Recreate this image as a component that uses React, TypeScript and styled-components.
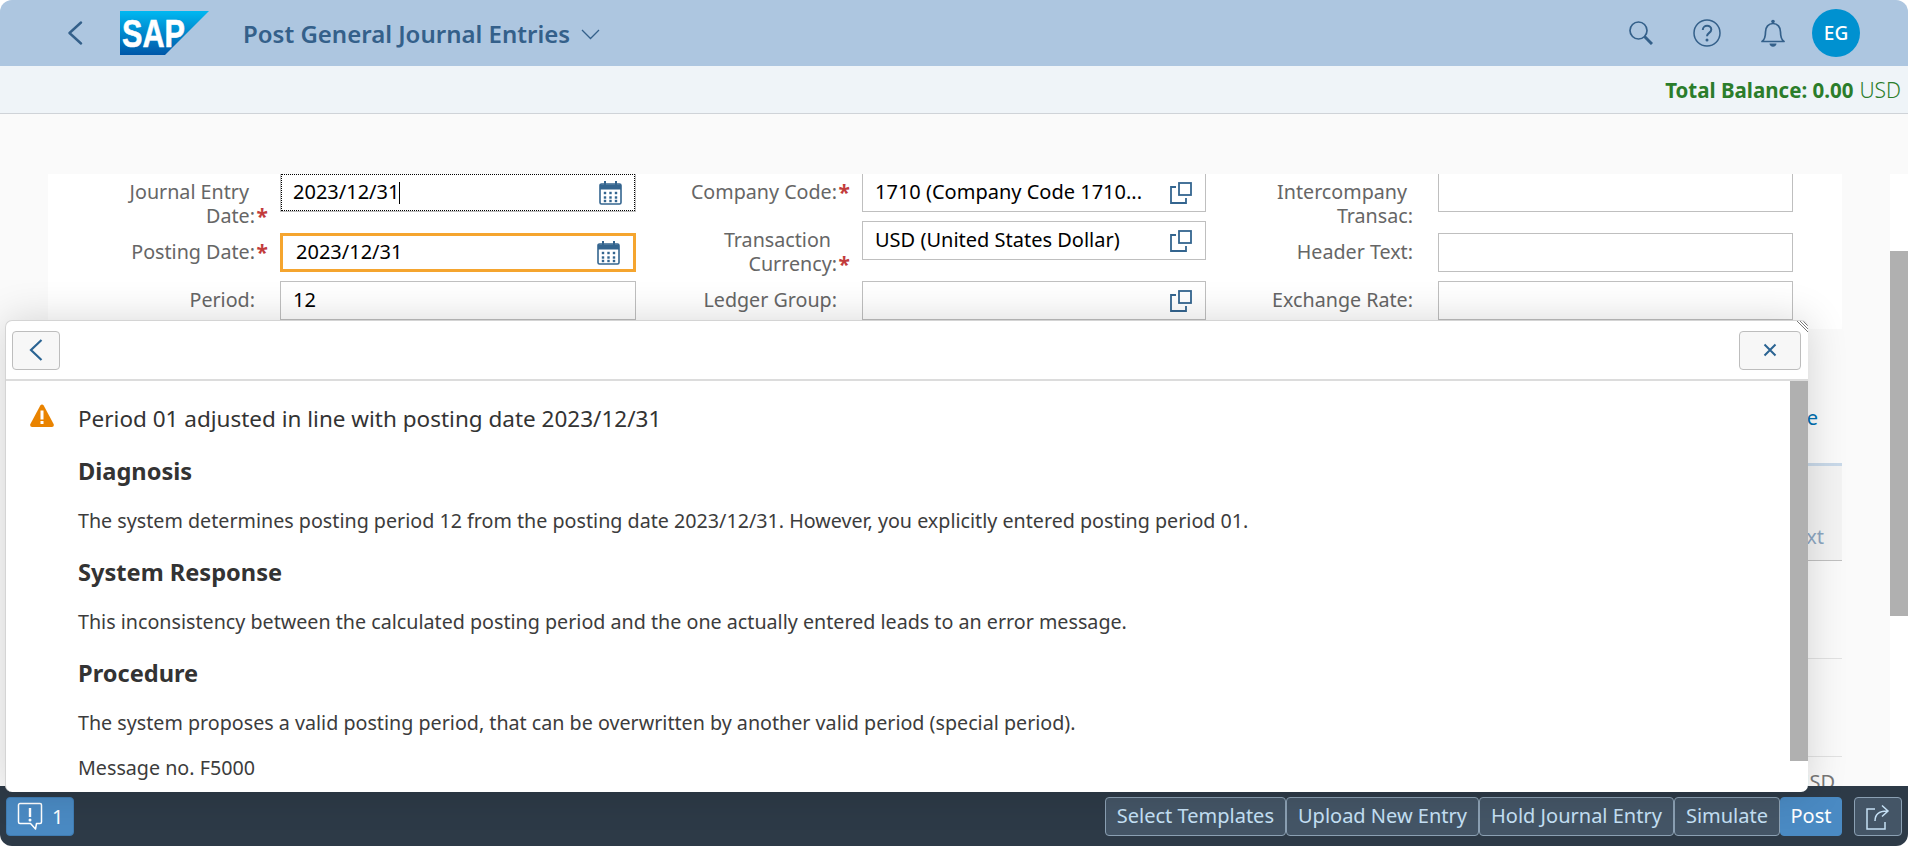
import React from 'react'
import styled, { createGlobalStyle } from 'styled-components'

const FONT = `"Noto Sans", "Open Sans", Arial, sans-serif`

const GlobalStyle = createGlobalStyle`
  html, body {
    margin: 0;
    padding: 0;
    height: 100%;
    background: #fff;
    overflow: hidden;
  }
  * {
    box-sizing: border-box;
  }
`

const Shell = styled.div`
  position: relative;
  width: 1908px;
  height: 846px;
  display: flex;
  flex-direction: column;
  overflow: hidden;
  border-radius: 12px;
  font-family: ${FONT};
  background: #fafafa;
`

const Header = styled.header`
  height: 66px;
  flex: none;
  display: flex;
  align-items: center;
  padding-left: 67px;
  padding-right: 48px;
  background: #adc6e0;
  color: #34608a;
`

const LogoWrap = styled.div`
  margin-left: 37px;
  width: 89px;
  height: 44px;
`

const Title = styled.div`
  margin-left: 34px;
  font-size: 24px;
  font-weight: 600;
  color: #34608a;
  white-space: nowrap;
`

const TitleCaret = styled.svg`
  margin-left: 11px;
  margin-top: 3px;
`

const HeaderRight = styled.div`
  margin-left: auto;
  display: flex;
  align-items: center;
`

const HeaderIcon = styled.svg<{ $gap: number }>`
  display: block;
  margin-right: ${p => p.$gap}px;
`

const Avatar = styled.div`
  width: 48px;
  height: 48px;
  border-radius: 50%;
  background: #0091d0;
  color: #fff;
  font-size: 19px;
  font-weight: 500;
  display: flex;
  align-items: center;
  justify-content: center;
`

const SubBar = styled.div`
  height: 48px;
  flex: none;
  display: flex;
  align-items: center;
  justify-content: flex-end;
  padding: 0 7px 0 0;
  background: #eff4f8;
  border-bottom: 1px solid #cfd3d8;
  font-size: 20.5px;
  color: #2b7d2b;
`

const Balance = styled.strong`
  font-weight: 700;
`

const Currency = styled.span`
  margin-left: 6px;
  font-weight: 300;
  font-size: 21px;
`

const Main = styled.main`
  flex: 1;
  min-height: 0;
  display: flex;
`

const Content = styled.div`
  flex: 1;
  min-width: 0;
  padding: 60px 48px 0;
`

const Panel = styled.div`
  height: 100%;
  display: flex;
  flex-direction: column;
  overflow: hidden;
  background: #fafafa;
`

const FormGrid = styled.div`
  flex: none;
  margin-top: -1px;
  height: 156px;
  display: grid;
  grid-template-columns: 532px 582px 1fr;
  background: #fff;
`

const FormColumn = styled.div`
  display: flex;
  flex-direction: column;
`

const Field = styled.div<{ $labelWidth: number; $inputWidth: number }>`
  display: grid;
  grid-template-columns: ${p => p.$labelWidth}px ${p => p.$inputWidth}px;
  column-gap: 25px;
  align-items: start;
`

const Label = styled.label`
  position: relative;
  padding: 7px 0 5px;
  text-align: right;
  font-size: 19.7px;
  line-height: 24px;
  color: #666;
`

const LabelFirstLine = styled.span`
  display: block;
  padding-right: 6px;
`

const Star = styled.span`
  position: absolute;
  right: -13px;
  bottom: 5px;
  color: #c23b3b;
  font-size: 21px;
  font-weight: 700;
`

const InputSlot = styled.div`
  padding-bottom: 9px;
`

const InputBox = styled.div<{ $active?: boolean; $focus?: boolean }>`
  position: relative;
  height: 39px;
  display: flex;
  align-items: center;
  padding-left: ${p => (p.$active ? 13 : 12)}px;
  padding-right: 13px;
  background: #fff;
  border: ${p => (p.$active ? '3px solid #f5a52f' : '1px solid #bfbfbf')};
  font-size: 20px;
  color: #000;
  &::after {
    content: '';
    display: ${p => (p.$focus ? 'block' : 'none')};
    position: absolute;
    inset: 0;
    border: 1px dotted #000;
    pointer-events: none;
  }
`

const InputValue = styled.span`
  flex: 1;
  min-width: 0;
  padding-bottom: 2px;
  white-space: nowrap;
`

const Caret = styled.span`
  display: inline-block;
  width: 1px;
  height: 22px;
  margin-left: 0;
  vertical-align: -5px;
  background: #000;
`

const TabStrip = styled.div`
  flex: none;
  height: 137px;
  display: flex;
  align-items: flex-end;
  justify-content: flex-end;
  padding: 0 24px 33px 0;
  border-bottom: 3px solid #c9d9e9;
  font-size: 20px;
  line-height: 24px;
  color: #0070b1;
`

const TableHead = styled.div`
  flex: none;
  height: 95px;
  display: flex;
  align-items: flex-end;
  justify-content: flex-end;
  padding: 0 18px 11px 0;
  border-bottom: 1px solid #c0c0c0;
  background: #f3f3f3;
  font-size: 20px;
  line-height: 24px;
  color: #8da7c2;
`

const TableRow = styled.div`
  flex: none;
  height: 98px;
  border-bottom: 1px solid #e2e2e2;
`

const TotalRow = styled.div`
  flex: 1;
  text-align: right;
  padding: 13px 7px 0 0;
  font-size: 20px;
  line-height: 24px;
  color: #777;
`

const PageScroll = styled.div`
  flex: none;
  width: 18px;
  margin-top: 60px;
  background: #fff;
`

const PageThumb = styled.div`
  margin-top: 77px;
  height: 365px;
  background: #b0b0b0;
`

const Footer = styled.footer`
  flex: none;
  height: 60px;
  display: flex;
  align-items: flex-start;
  padding: 11px 6px 0;
  background: #2d3a47;
`

const MessageButton = styled.button`
  width: 68px;
  height: 39px;
  display: flex;
  align-items: center;
  padding: 0 0 0 10px;
  gap: 9px;
  border: 1px solid #3f7cb3;
  border-radius: 4px;
  background: #4a8ac3;
  color: #fff;
  font-family: inherit;
  font-size: 20px;
`

const FooterActions = styled.div`
  margin-left: auto;
  display: flex;
`

const ActionButton = styled.button<{ $primary?: boolean }>`
  height: 39px;
  padding: 0 ${p => (p.$primary ? 9.5 : 11)}px 2px;
  border: 1px solid ${p => (p.$primary ? '#4a8ac3' : '#8ba0b3')};
  border-radius: 4px;
  background: ${p => (p.$primary ? '#4a8ac3' : '#445566')};
  color: ${p => (p.$primary ? '#fff' : '#c5e0f5')};
  font-family: inherit;
  font-size: 20px;
  white-space: nowrap;
`

const ShareButton = styled.button`
  width: 48px;
  height: 39px;
  margin-left: 12px;
  display: flex;
  align-items: center;
  justify-content: center;
  padding: 0;
  border: 1px solid #8ba0b3;
  border-radius: 4px;
  background: #445566;
`

const Dialog = styled.section`
  position: absolute;
  left: 5px;
  top: 320px;
  width: 1803px;
  height: 472px;
  display: flex;
  flex-direction: column;
  border: 1px solid #d4d4d4;
  border-right: none;
  border-bottom: none;
  border-radius: 7px;
  background: #fff;
  box-shadow: 0 0 40px rgba(0, 0, 0, 0.16);
  color: #333;
  overflow: hidden;
`

const ResizeGrip = styled.svg`
  position: absolute;
  top: 0;
  right: 0;
`

const DialogBar = styled.div`
  flex: none;
  height: 60px;
  display: flex;
  align-items: center;
  justify-content: space-between;
  padding: 0 7px 0 6px;
  border-bottom: 2px solid #dcdcdc;
`

const DialogButton = styled.button<{ $wide?: boolean }>`
  width: ${p => (p.$wide ? 62 : 48)}px;
  height: 39px;
  display: flex;
  align-items: center;
  justify-content: center;
  padding: 0;
  border: 1px solid #bdbdbd;
  border-radius: 4px;
  background: #f7f7f7;
`

const DialogBody = styled.div`
  flex: 1;
  min-height: 0;
  display: flex;
`

const DialogText = styled.div`
  flex: 1;
  min-width: 0;
  padding: 25px 0 0 72px;
  position: relative;
`

const WarnIcon = styled.svg`
  position: absolute;
  left: 24px;
  top: 23px;
`

const Summary = styled.div`
  font-size: 22.5px;
  line-height: 26px;
`

const SectionTitle = styled.h3`
  margin: 26px 0 25px;
  font-size: 23.6px;
  line-height: 26px;
  font-weight: 700;
  color: #333;
`

const Paragraph = styled.p`
  margin: 0;
  font-size: 19.7px;
  line-height: 24px;
  color: #3c3c3c;
`

const MessageNo = styled(Paragraph)`
  margin-top: 21px;
`

const DialogScroll = styled.div`
  flex: none;
  align-self: flex-start;
  width: 18px;
  height: 380px;
  background: #b0b0b0;
`

const SapLogo = () => (
  <svg width="89" height="44" viewBox="0 0 89 44">
    <defs>
      <linearGradient id="sapGrad" x1="0" y1="0" x2="0" y2="1">
        <stop offset="0" stopColor="#00b8f1" />
        <stop offset="1" stopColor="#0057a8" />
      </linearGradient>
    </defs>
    <polygon points="0,0 89,0 45,44 0,44" fill="url(#sapGrad)" />
    <text x="2" y="36" fontFamily="Liberation Sans, Arial, sans-serif" fontWeight="700" fontSize="39" fill="#fff" stroke="#fff" strokeWidth="0.6" textLength="63" lengthAdjust="spacingAndGlyphs">SAP</text>
  </svg>
)

const CalendarIcon = () => (
  <svg width="23" height="25" viewBox="0 0 23 25" fill="none">
    <path d="M1 5.5a1.5 1.5 0 0 1 1.5-1.5h18a1.5 1.5 0 0 1 1.5 1.5v17a1.5 1.5 0 0 1-1.5 1.5h-18a1.5 1.5 0 0 1-1.5-1.5z" stroke="#34658f" strokeWidth="1.6" />
    <path d="M1 4.5h21v5H1z" fill="#34658f" />
    <path d="M6 1v4M17 1v4" stroke="#34658f" strokeWidth="2" />
    {[13, 17.5, 21].map(y =>
      [6, 11.5, 17].map(x => <rect key={`${x}-${y}`} x={x - 1.2} y={y - 1.2} width="2.4" height="2.4" fill="#34658f" />)
    )}
  </svg>
)

const ValueHelpIcon = () => (
  <svg width="22" height="22" viewBox="0 0 22 22" fill="none" stroke="#34658f" strokeWidth="1.8">
    <path d="M6 5H1v16h15v-5" />
    <rect x="9" y="1" width="12" height="12" />
  </svg>
)

type FieldDef = { label: React.ReactNode; required?: boolean; value?: string; icon?: 'cal' | 'help'; active?: boolean; focus?: boolean }

const FormField = ({ def, labelWidth, inputWidth }: { def: FieldDef; labelWidth: number; inputWidth: number }) => (
  <Field $labelWidth={labelWidth} $inputWidth={inputWidth}>
    <Label>
      {def.label}
      {def.required && <Star>*</Star>}
    </Label>
    <InputSlot>
      <InputBox $active={def.active} $focus={def.focus}>
        <InputValue>
          {def.value}
          {def.focus && <Caret />}
        </InputValue>
        {def.icon === 'cal' && <CalendarIcon />}
        {def.icon === 'help' && <ValueHelpIcon />}
      </InputBox>
    </InputSlot>
  </Field>
)

const column1: FieldDef[] = [
  { label: <><LabelFirstLine>Journal Entry</LabelFirstLine>Date:</>, required: true, value: '2023/12/31', icon: 'cal', focus: true },
  { label: 'Posting Date:', required: true, value: '2023/12/31', icon: 'cal', active: true },
  { label: 'Period:', value: '12' },
]

const column2: FieldDef[] = [
  { label: 'Company Code:', required: true, value: '1710 (Company Code 1710...', icon: 'help' },
  { label: <><LabelFirstLine>Transaction</LabelFirstLine>Currency:</>, required: true, value: 'USD (United States Dollar)', icon: 'help' },
  { label: 'Ledger Group:', icon: 'help' },
]

const column3: FieldDef[] = [
  { label: <><LabelFirstLine>Intercompany</LabelFirstLine>Transac:</> },
  { label: 'Header Text:' },
  { label: 'Exchange Rate:' },
]

export default function App() {
  return (
    <Shell>
      <GlobalStyle />
      <Header>
        <svg width="16" height="24" viewBox="0 0 16 24" fill="none" stroke="#34608a" strokeWidth="2.4" strokeLinecap="round" strokeLinejoin="round">
          <path d="M14 1.5 2.5 12 14 22.5" />
        </svg>
        <LogoWrap><SapLogo /></LogoWrap>
        <Title>Post General Journal Entries</Title>
        <TitleCaret width="19" height="11" viewBox="0 0 19 11" fill="none" stroke="#34608a" strokeWidth="1.3">
          <path d="M1 1l8.500 8.500L18 1" />
        </TitleCaret>
        <HeaderRight>
          <HeaderIcon $gap={40} width="24" height="24" viewBox="0 0 24 24" fill="none" stroke="#34608a">
            <circle cx="9.500" cy="9.500" r="8.500" strokeWidth="1.700" />
            <path d="M15.500 15.500 23 23" strokeWidth="3" />
          </HeaderIcon>
          <HeaderIcon $gap={40} width="28" height="28" viewBox="0 0 28 28" fill="none" stroke="#34608a">
            <circle cx="14" cy="14" r="13" strokeWidth="1.500" />
            <path d="M9.800 11c0-2.600 2-4.200 4.300-4.200s4.200 1.500 4.200 3.700c0 3.400-4.300 3.300-4.300 6.700" strokeWidth="2" />
            <circle cx="14" cy="21" r="1.500" fill="#34608a" stroke="none" />
          </HeaderIcon>
          <HeaderIcon $gap={27} width="24" height="28" viewBox="0 0 24 28" fill="none" stroke="#34608a">
            <path d="M1 22.500c3-2 3.500-5.500 3.500-9.500 0-5 3-8.500 7.500-8.500s7.500 3.500 7.500 8.500c0 4 .5 7.500 3.500 9.500z" strokeWidth="1.700" strokeLinejoin="round" />
            <circle cx="12" cy="2.500" r="1.800" fill="#34608a" stroke="none" />
            <path d="M8.500 24.500h7c0 2-1.500 3.200-3.500 3.200s-3.500-1.200-3.500-3.200z" fill="#34608a" stroke="none" />
          </HeaderIcon>
          <Avatar>EG</Avatar>
        </HeaderRight>
      </Header>
      <SubBar>
        <Balance>Total Balance: 0.00</Balance>
        <Currency>USD</Currency>
      </SubBar>
      <Main>
        <Content>
          <Panel>
            <FormGrid>
              <FormColumn>
                {column1.map((f, i) => <FormField key={i} def={f} labelWidth={207} inputWidth={356} />)}
              </FormColumn>
              <FormColumn>
                {column2.map((f, i) => <FormField key={i} def={f} labelWidth={257} inputWidth={344} />)}
              </FormColumn>
              <FormColumn>
                {column3.map((f, i) => <FormField key={i} def={f} labelWidth={251} inputWidth={355} />)}
              </FormColumn>
            </FormGrid>
            <TabStrip>Delete</TabStrip>
            <TableHead>Item Text</TableHead>
            <TableRow />
            <TableRow />
            <TotalRow>USD</TotalRow>
          </Panel>
        </Content>
        <PageScroll><PageThumb /></PageScroll>
      </Main>
      <Footer>
        <MessageButton>
          <svg width="26" height="30" viewBox="0 0 26 30" fill="none">
            <path d="M3 1.500h20a1.500 1.500 0 0 1 1.500 1.500v17a1.500 1.500 0 0 1-1.500 1.500h-3.500l-1 5.500-5-5.500H3a1.500 1.500 0 0 1-1.500-1.500V3A1.500 1.500 0 0 1 3 1.500z" stroke="#fff" strokeWidth="1.500" strokeLinejoin="round" />
            <path d="M13 6v9" stroke="#fff" strokeWidth="2.400" />
            <circle cx="13" cy="18" r="1.500" fill="#fff" />
          </svg>
          1
        </MessageButton>
        <FooterActions>
          <ActionButton>Select Templates</ActionButton>
          <ActionButton>Upload New Entry</ActionButton>
          <ActionButton>Hold Journal Entry</ActionButton>
          <ActionButton>Simulate</ActionButton>
          <ActionButton $primary>Post</ActionButton>
        </FooterActions>
        <ShareButton>
          <svg width="24" height="26" viewBox="0 0 24 26" fill="none" stroke="#c5e0f5" strokeWidth="1.500">
            <path d="M9 5H1v20h18v-7" />
            <path d="M9 17c0-7 4-10 12-10M16 1.500 22 7l-6 5.500" />
          </svg>
        </ShareButton>
      </Footer>
      <Dialog>
        <ResizeGrip width="12" height="12" viewBox="0 0 12 12" stroke="#555" strokeWidth="0.800">
          <path d="M1 0l11 11M4 0l8 8M7 0l5 5" />
        </ResizeGrip>
        <DialogBar>
          <DialogButton>
            <svg width="14" height="22" viewBox="0 0 14 22" fill="none" stroke="#2b6493" strokeWidth="2.200">
              <path d="M12.500 1 2 11l10.500 10" />
            </svg>
          </DialogButton>
          <DialogButton $wide>
            <svg width="14" height="14" viewBox="0 0 14 14" fill="none" stroke="#2b6493" strokeWidth="2">
              <path d="M1.500 1.500l11 11M12.500 1.500l-11 11" />
            </svg>
          </DialogButton>
        </DialogBar>
        <DialogBody>
          <DialogText>
            <WarnIcon width="24" height="24" viewBox="0 0 24 24">
              <path d="M10.300 1.500c.8-1.300 2.600-1.300 3.400 0l9.900 18.500c.7 1.400-.2 3-1.700 3H2.100C.6 23-.3 21.400.4 20z" fill="#e98300" />
              <rect x="10.500" y="6.500" width="3" height="9" fill="#fff" />
              <rect x="10.500" y="17" width="3" height="3" fill="#fff" />
            </WarnIcon>
            <Summary>Period 01 adjusted in line with posting date 2023/12/31</Summary>
            <SectionTitle>Diagnosis</SectionTitle>
            <Paragraph>The system determines posting period 12 from the posting date 2023/12/31. However, you explicitly entered posting period 01.</Paragraph>
            <SectionTitle>System Response</SectionTitle>
            <Paragraph>This inconsistency between the calculated posting period and the one actually entered leads to an error message.</Paragraph>
            <SectionTitle>Procedure</SectionTitle>
            <Paragraph>The system proposes a valid posting period, that can be overwritten by another valid period (special period).</Paragraph>
            <MessageNo>Message no. F5000</MessageNo>
          </DialogText>
          <DialogScroll />
        </DialogBody>
      </Dialog>
    </Shell>
  )
}
